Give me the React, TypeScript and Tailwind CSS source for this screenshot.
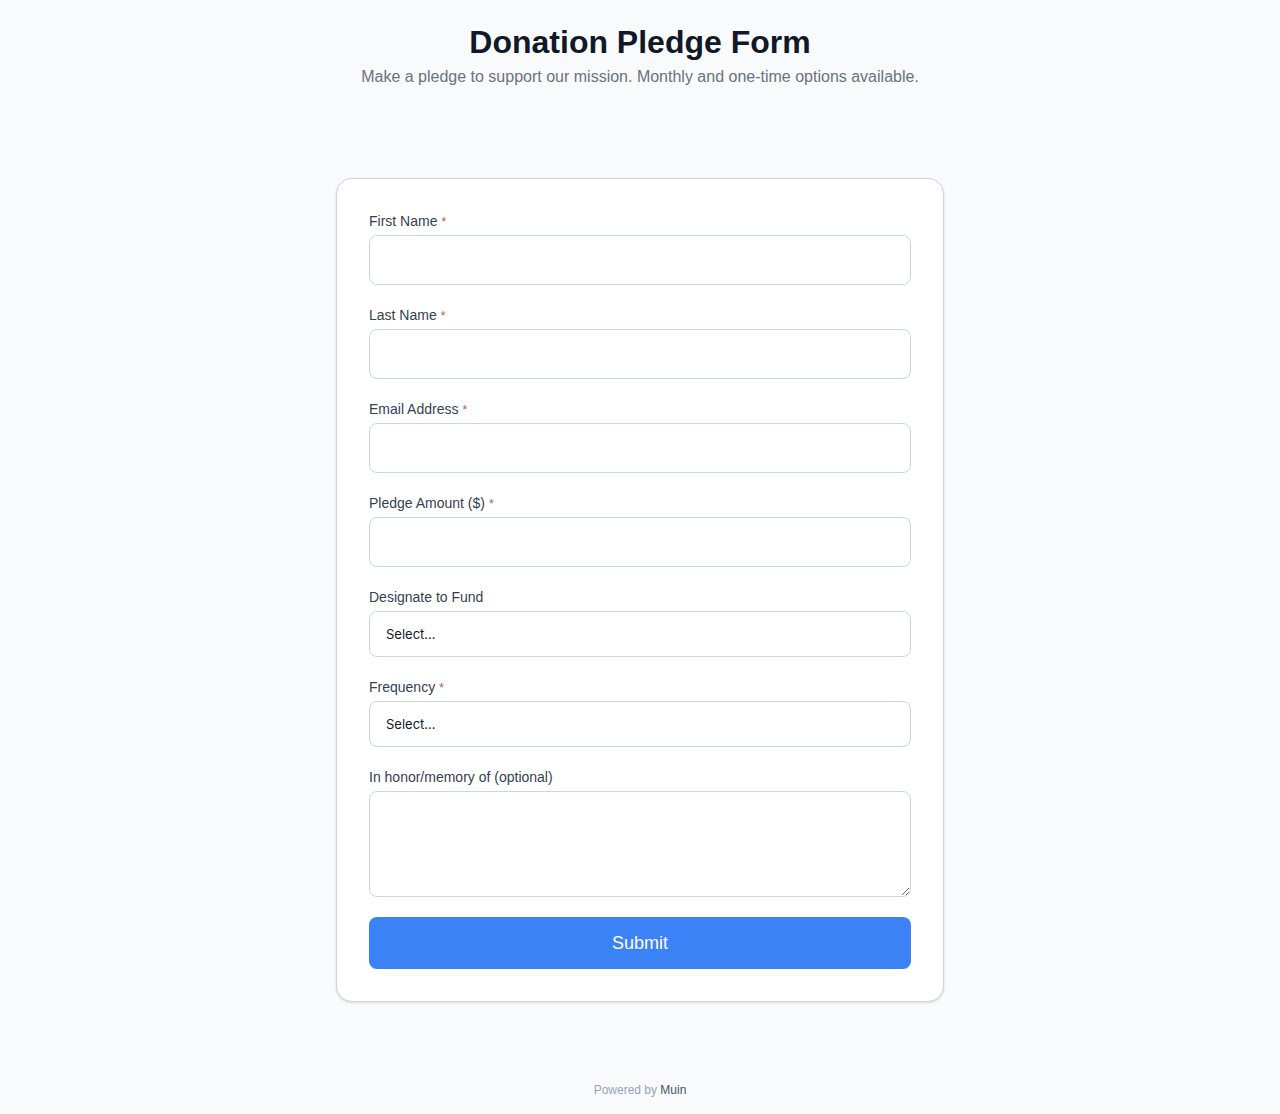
import React from "react";

const fields = [
  { label: "First Name", required: true, type: "text" },
  { label: "Last Name", required: true, type: "text" },
  { label: "Email Address", required: true, type: "email" },
  { label: "Pledge Amount ($)", required: true, type: "number" },
];

const selects = [
  { label: "Designate to Fund", required: false },
  { label: "Frequency", required: true },
];

function Label({ text, required }: { text: string; required?: boolean }) {
  return (
    <label className="block text-sm leading-5 text-[#334155] mb-1">
      {text}
      {required && <span className="text-[#b4535d] text-xs ml-1">*</span>}
    </label>
  );
}

export default function App() {
  return (
    <div className="min-h-[1114px] bg-[#f8fafc] flex flex-col items-center font-['Liberation_Sans',Arial,sans-serif]">
      <header className="pt-6 text-center">
        <h1 className="text-[32px] leading-9 font-bold text-[#111827]">Donation Pledge Form</h1>
        <p className="mt-[5px] text-base leading-6 text-[#6b7280]">
          Make a pledge to support our mission. Monthly and one-time options available.
        </p>
      </header>

      <main className="mt-[89px] w-[608px] bg-white border border-[#cbd5e1] rounded-2xl shadow-sm p-8">
        <form className="flex flex-col gap-5" onSubmit={(e) => e.preventDefault()}>
          {fields.map((f) => (
            <div key={f.label}>
              <Label text={f.label} required={f.required} />
              <input
                type={f.type}
                className="block w-full h-[50px] px-4 rounded-lg border border-[#cbd5e1] bg-white text-sm outline-none"
              />
            </div>
          ))}

          {selects.map((s) => (
            <div key={s.label}>
              <Label text={s.label} required={s.required} />
              <div className="flex items-center pt-px h-[46px] px-4 rounded-lg border border-[#cbd5e1] bg-white text-[13px] text-[#111827] font-['Inter',sans-serif]">
                Select…
              </div>
            </div>
          ))}

          <div>
            <Label text="In honor/memory of (optional)" />
            <textarea className="block w-full h-[106px] px-4 py-3 rounded-lg border border-[#cbd5e1] bg-white text-sm outline-none" />
          </div>

          <button
            type="submit"
            className="h-[52px] w-full rounded-lg bg-[#3b82f6] text-white text-lg"
          >
            Submit
          </button>
        </form>
      </main>

      <footer className="mt-auto pb-4 text-xs leading-4 text-[#94a3b8]">
        Powered by <span className="text-[#475569]">Muin</span>
      </footer>
    </div>
  );
}
